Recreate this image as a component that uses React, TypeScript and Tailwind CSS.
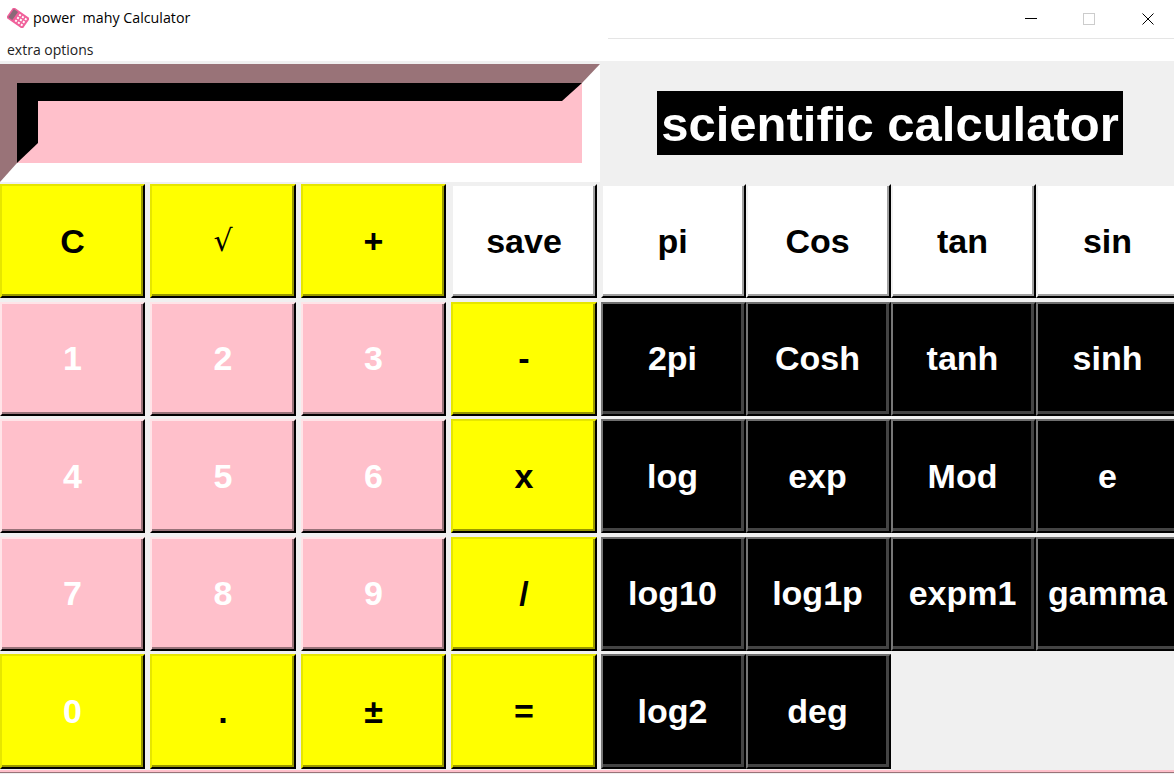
import React from 'react';

type Kind = 'yellow' | 'pink' | 'white' | 'black' | 'zero';

const kindClass: Record<Kind, string> = {
  yellow: 'bg-[#ffff00] text-black border-t-[#e6e600] border-l-[#e6e600] shadow-[inset_-2px_-2px_0_#999900]',
  zero: 'bg-[#ffff00] text-white border-t-[#e6e600] border-l-[#e6e600] shadow-[inset_-2px_-2px_0_#999900]',
  pink: 'bg-[#ffc0cb] text-white border-t-[#ffe4e8] border-l-[#ffe4e8] shadow-[inset_-2px_-2px_0_#99737a]',
  white: 'bg-white text-black border-t-[#f0f0f0] border-l-[#f0f0f0] shadow-[inset_-2px_-2px_0_#a0a0a0]',
  black: 'bg-black text-white border-t-[#6e6e6e] border-l-[#777777] shadow-[inset_-3px_-3px_0_#444444]',
};

const leftKeys: [string, Kind][] = [
  ['C', 'yellow'], ['√', 'yellow'], ['+', 'yellow'], ['save', 'white'],
  ['1', 'pink'], ['2', 'pink'], ['3', 'pink'], ['-', 'yellow'],
  ['4', 'pink'], ['5', 'pink'], ['6', 'pink'], ['x', 'yellow'],
  ['7', 'pink'], ['8', 'pink'], ['9', 'pink'], ['/', 'yellow'],
  ['0', 'zero'], ['.', 'yellow'], ['±', 'yellow'], ['=', 'yellow'],
];

const rightKeys: [string, Kind][] = [
  ['pi', 'white'], ['Cos', 'white'], ['tan', 'white'], ['sin', 'white'],
  ['2pi', 'black'], ['Cosh', 'black'], ['tanh', 'black'], ['sinh', 'black'],
  ['log', 'black'], ['exp', 'black'], ['Mod', 'black'], ['e', 'black'],
  ['log10', 'black'], ['log1p', 'black'], ['expm1', 'black'], ['gamma', 'black'],
  ['log2', 'black'], ['deg', 'black'],
];

const Key = ({ label, kind }: { label: string; kind: Kind }) => (
  <button
    className={`flex items-center justify-center border-2 border-r-black border-b-black pb-[1px] font-bold text-[34px] leading-none ${kindClass[kind]}`}
  >
    {label === '√' ? <span className="font-normal font-['DejaVu_Serif',serif] text-[30px]">{label}</span> : label}
  </button>
);

const AppIcon = () => (
  <svg width="22" height="20" viewBox="0 0 22 20" className="shrink-0">
    <g transform="rotate(35 11 10)">
      <rect x="1" y="3.5" width="20" height="13" rx="1" fill="#f0609a" />
      <rect x="2.5" y="5" width="5" height="10" fill="#8a6a78" />
      <rect x="10" y="5.5" width="2" height="2" fill="#ffffff" />
      <rect x="13.5" y="5.5" width="2" height="2" fill="#ffffff" />
      <rect x="17" y="5.5" width="2" height="2" fill="#ffffff" />
      <rect x="10" y="9" width="2" height="2" fill="#ffffff" />
      <rect x="13.5" y="9" width="2" height="2" fill="#ffffff" />
      <rect x="17" y="9" width="2" height="2" fill="#ffffff" />
      <rect x="10" y="12.5" width="2" height="2" fill="#ffffff" />
      <rect x="13.5" y="12.5" width="2" height="2" fill="#ffffff" />
      <rect x="17" y="12.5" width="2" height="2" fill="#ffffff" />
    </g>
  </svg>
);

export default function App() {
  return (
    <div className="flex flex-col w-screen h-screen overflow-hidden bg-[#f0f0f0] font-['Liberation_Sans',Arial,sans-serif]">
      {/* title bar */}
      <div className="flex items-center h-[38px] pl-[7px] bg-white font-['Open_Sans',sans-serif] text-[14.25px] text-black">
        <div className="flex items-center mb-[2px]">
          <AppIcon />
          <span className="ml-[4px] whitespace-pre">power  mahy Calculator</span>
        </div>
        <div className="flex items-center ml-auto h-full">
          <svg width="174" height="38" viewBox="0 0 174 38">
            <path d="M25 18.5h12" stroke="#000" fill="none" />
            <rect x="83.5" y="13.5" width="11" height="11" stroke="#cccccc" fill="none" />
            <path d="M142.5 13.5l11 11M153.5 13.5l-11 11" stroke="#000" fill="none" />
          </svg>
        </div>
      </div>

      {/* menu */}
      <div className="flex h-[23px] bg-white">
        <span className="w-[608px] pl-[7px] pt-[2px] font-['Open_Sans',sans-serif] text-[14px] leading-[20px] text-[#222222]">extra options</span>
        <div className="flex-1 border-t border-[#e5e5e5]" />
      </div>

      {/* display and heading */}
      <div className="flex h-[123px] pt-[3px]">
        <div className="w-[600px] h-[118px] border-solid border-t-[19px] border-l-[17px] border-r-[18px] border-b-[19px] border-t-[#997378] border-l-[#997378] border-r-white border-b-white">
          <div className="h-full bg-[#ffc0cb] border-solid border-t-[18px] border-l-[21px] border-r-[20px] border-b-[20px] border-t-black border-l-black border-r-[#ffc0cb] border-b-[#ffc0cb]" />
        </div>
        <div className="flex flex-1 justify-center pt-[27px] pl-[6px]">
          <div className="flex items-center justify-center w-[466px] h-[64px] pt-[2px] bg-black text-white font-bold text-[49px] leading-none">
            scientific calculator
          </div>
        </div>
      </div>

      {/* keys */}
      <div className="flex">
        <div className="grid grid-cols-[145px_146px_145px_146px] grid-rows-[114px_114px_114px_114px_115px] gap-x-[5px] gap-y-[3.5px]">
          {leftKeys.map(([label, kind]) => (
            <Key key={label} label={label} kind={kind} />
          ))}
        </div>
        <div className="grid grid-cols-[145px_145px_145px_145px] grid-rows-[114px_114px_114px_114px_115px] gap-y-[3.5px] ml-[4px] [&>button]:pr-[2px]">
          {rightKeys.map(([label, kind]) => (
            <Key key={label} label={label} kind={kind} />
          ))}
        </div>
      </div>

      {/* pink strip under the keys */}
      <div className="h-[3px] mt-[1px] bg-[#ffc0cb] border-b border-[#997378]" />
    </div>
  );
}
